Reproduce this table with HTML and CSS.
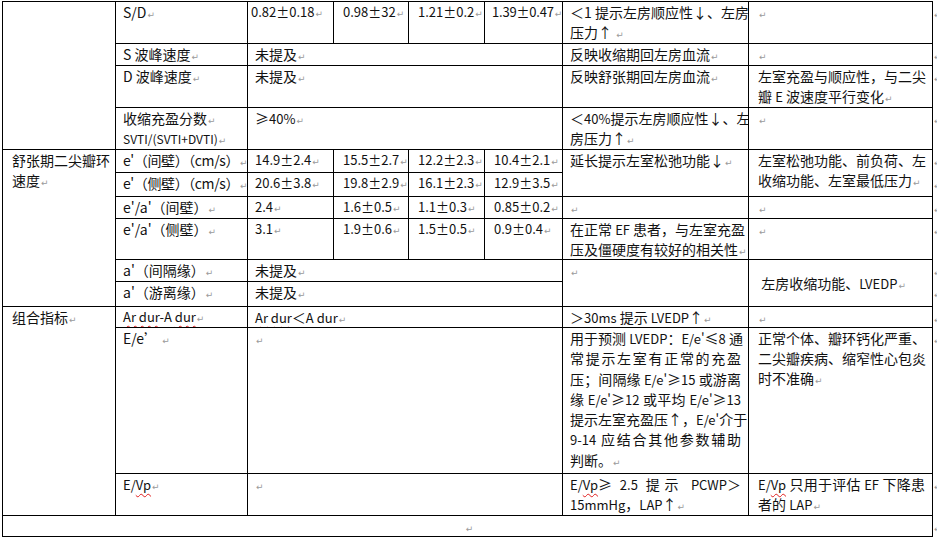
FILE: index.html
```html
<!DOCTYPE html>
<html lang="zh-CN">
<head>
<meta charset="utf-8">
<title>超声参数表</title>
<link rel="stylesheet" href="styles.css">
</head>
<body>
<table class="tbl">
<colgroup>
<col class="w1"><col class="w2"><col class="w3"><col class="w4"><col class="w5"><col class="w6"><col class="w7"><col class="w8"><col class="w9">
</colgroup>
<tr class="r42">
<td rowspan="4"></td>
<td>S/D<span class="p">↵</span></td>
<td class="tight n">0.82±0.18<span class="p">↵</span></td>
<td class="num n">0.98±32<span class="p">↵</span></td>
<td class="num n">1.21±0.2<span class="p">↵</span></td>
<td class="num2 n">1.39±0.47<span class="p">↵</span></td>
<td>＜1 提示左房顺应性↓、左房<br>压力↑ <span class="p">↵</span></td>
<td class="c8"><span class="p">↵</span></td>
<td class="eor"><span class="p">↵</span></td>
</tr>
<tr class="r22">
<td>S 波峰速度<span class="p">↵</span></td>
<td colspan="4">未提及<span class="p">↵</span></td>
<td>反映收缩期回左房血流<span class="p">↵</span></td>
<td class="c8"><span class="p">↵</span></td>
<td class="eor"><span class="p">↵</span></td>
</tr>
<tr class="r42">
<td>D 波峰速度<span class="p">↵</span></td>
<td colspan="4">未提及<span class="p">↵</span></td>
<td>反映舒张期回左房血流<span class="p">↵</span></td>
<td class="c8">左室充盈与顺应性，与二尖<br>瓣 <span class="sm">E</span> 波速度平行变化<span class="p">↵</span></td>
<td class="eor"><span class="p">↵</span></td>
</tr>
<tr class="r42">
<td>收缩充盈分数<span class="p">↵</span><br><span class="xs">SVTI/(SVTI+DVTI)</span><span class="p">↵</span></td>
<td colspan="4">≥<span class="sm">40%</span><span class="p">↵</span></td>
<td>＜<span class="sm">40%</span>提示左房顺应性↓、左<br>房压力↑<span class="p">↵</span></td>
<td class="c8"><span class="p">↵</span></td>
<td class="eor"><span class="p">↵</span></td>
</tr>
<tr class="r23">
<td rowspan="6" class="c1">舒张期二尖瓣环<br>速度<span class="p">↵</span></td>
<td class="c2">e'（间壁）（cm/s）<span class="p">↵</span></td>
<td class="n">14.9±2.4<span class="p">↵</span></td>
<td class="num n">15.5±2.7<span class="p">↵</span></td>
<td class="num n">12.2±2.3<span class="p">↵</span></td>
<td class="num n">10.4±2.1<span class="p">↵</span></td>
<td rowspan="2">延长提示左室松弛功能↓<span class="p">↵</span></td>
<td rowspan="2" class="c8">左室松弛功能、前负荷、左<br>收缩功能、左室最低压力<span class="p">↵</span></td>
<td class="eor"><span class="p">↵</span></td>
</tr>
<tr class="r24">
<td class="c2">e'（侧壁）（cm/s）<span class="p">↵</span></td>
<td class="n">20.6±3.8<span class="p">↵</span></td>
<td class="num n">19.8±2.9<span class="p">↵</span></td>
<td class="num n">16.1±2.3<span class="p">↵</span></td>
<td class="num n">12.9±3.5<span class="p">↵</span></td>
<td class="eor"><span class="p">↵</span></td>
</tr>
<tr class="r22">
<td>e'/a'（间壁）<span class="p">↵</span></td>
<td class="n">2.4<span class="p">↵</span></td>
<td class="num n">1.6±0.5<span class="p">↵</span></td>
<td class="num n">1.1±0.3<span class="p">↵</span></td>
<td class="num n">0.85±0.2<span class="p">↵</span></td>
<td><span class="p">↵</span></td>
<td class="c8"><span class="p">↵</span></td>
<td class="eor"><span class="p">↵</span></td>
</tr>
<tr class="r41">
<td>e'/a'（侧壁）<span class="p">↵</span></td>
<td class="n">3.1<span class="p">↵</span></td>
<td class="num n">1.9±0.6<span class="p">↵</span></td>
<td class="num n">1.5±0.5<span class="p">↵</span></td>
<td class="num n">0.9±0.4<span class="p">↵</span></td>
<td>在正常 <span class="sm">EF</span> 患者，与左室充盈<br>压及僵硬度有较好的相关性<span class="p">↵</span></td>
<td class="c8"><span class="p">↵</span></td>
<td class="eor"><span class="p">↵</span></td>
</tr>
<tr class="r22">
<td>a'（间隔缘）<span class="p">↵</span></td>
<td colspan="4">未提及<span class="p">↵</span></td>
<td rowspan="2"><span class="p">↵</span></td>
<td rowspan="2" class="c8 mid">&nbsp;左房收缩功能、<span class="sm">LVEDP</span><span class="p">↵</span></td>
<td class="eor"><span class="p">↵</span></td>
</tr>
<tr class="r25">
<td>a'（游离缘）<span class="p">↵</span></td>
<td colspan="4">未提及<span class="p">↵</span></td>
<td class="eor"><span class="p">↵</span></td>
</tr>
<tr class="r21">
<td rowspan="3" class="c1">组合指标<span class="p">↵</span></td>
<td class="n"><span class="sp">Ar dur</span>-A <span class="sp">dur</span><span class="p">↵</span></td>
<td colspan="4"><span class="sm"><span class="sp">Ar dur</span></span>＜<span class="sm">A dur</span><span class="p">↵</span></td>
<td>＞<span class="sm">30ms</span> 提示 <span class="sm">LVEDP</span>↑<span class="p">↵</span></td>
<td class="c8"><span class="p">↵</span></td>
<td class="eor"><span class="p">↵</span></td>
</tr>
<tr class="r146">
<td>E/e’ <span class="p">↵</span></td>
<td colspan="4"><span class="p">↵</span></td>
<td class="jc">
<span class="j">用于预测 <span class="sm">LVEDP</span>：<span class="sm">E/e'</span>≤<span class="sm">8</span> 通</span>
<span class="j">常提示左室有正常的充盈</span>
<span class="j">压；间隔缘 <span class="sm">E/e'</span>≥<span class="sm">15</span> 或游离</span>
<span class="j">缘 <span class="sm">E/e'</span>≥<span class="sm">12</span> 或平均 <span class="sm">E/e'</span>≥<span class="sm">13</span></span>
<span class="j">提示左室充盈压↑，<span class="sm">E/e'</span>介于</span>
<span class="j"><span class="sm">9-14</span> 应结合其他参数辅助</span>
<span class="jl">判断。<span class="p">↵</span></span>
</td>
<td class="c8">正常个体、瓣环钙化严重、<br>二尖瓣疾病、缩窄性心包炎<br>时不准确<span class="p">↵</span></td>
<td class="eor"><span class="p">↵</span></td>
</tr>
<tr class="r42">
<td><span class="sm">E/<span class="sp">Vp</span></span><span class="p">↵</span></td>
<td colspan="4"><span class="p">↵</span></td>
<td class="jc">
<span class="j"><span class="sm">E/<span class="sp">Vp</span></span>≥ <span class="sm">2.5</span> 提示 <span class="sm">PCWP</span>＞</span>
<span class="jl"><span class="sm">15mmHg</span>，<span class="sm">LAP</span>↑<span class="p">↵</span></span>
</td>
<td class="c8 jc">
<span class="j"><span class="sm">E/<span class="sp">Vp</span></span> 只用于评估 <span class="sm">EF</span> 下降患</span>
<span class="jl">者的 <span class="sm">LAP</span><span class="p">↵</span></span>
</td>
<td class="eor"><span class="p">↵</span></td>
</tr>
<tr class="r21">
<td colspan="8" class="center"><span class="p">↵</span></td>
<td class="eor"><span class="p">↵</span></td>
</tr>
</table>
</body>
</html>
```
FILE: styles.css
```css
html, body {
  margin: 0;
  padding: 0;
  background: #ffffff;
}
body {
  padding: 1px 0 0 2px;
  font-family: "Noto Sans CJK SC", "Liberation Sans", sans-serif;
  font-size: 14px;
  color: #111111;
}
.tbl {
  border-collapse: collapse;
  table-layout: fixed;
  width: 935px;
}
.w1 { width: 113px; }
.w2 { width: 132px; }
.w3 { width: 86px; }
.w4 { width: 75px; }
.w5 { width: 76px; }
.w6 { width: 78px; }
.w7 { width: 186px; }
.w8 { width: 184px; }
.w9 { width: 5px; }
.tbl td {
  border: 1px solid #000000;
  padding: 0 4px 0 7px;
  vertical-align: top;
  line-height: 20px;
  white-space: nowrap;
  overflow: hidden;
}
.tbl td.n { font-size: 13px; }
.tbl td.c1 { padding-left: 9px; }
.tbl td.c8 { padding-left: 9px; }
.tbl td.num { padding-left: 9px; }
.tbl td.num2 { padding-left: 7px; padding-right: 0; letter-spacing: -0.2px; }
.tbl td.tight { padding-left: 3px; padding-right: 0; }
.tbl td.c2 { letter-spacing: -0.4px; }
.tbl td.mid { vertical-align: middle; padding-left: 9px; }
.tbl td.center { text-align: center; }
.tbl td.eor {
  border: none;
  padding: 0;
  overflow: visible;
}
.r21 { height: 21px; }
.r22 { height: 22px; }
.r23 { height: 23px; }
.r24 { height: 24px; }
.r25 { height: 25px; }
.r41 { height: 41px; }
.r42 { height: 42px; }
.r146 { height: 146px; }
.p {
  color: #9a9a9a;
  font-family: "DejaVu Sans", sans-serif;
  font-size: 9px;
  margin-left: 1px;
  line-height: 0;
}
.sm { font-size: 13px; line-height: 0; }
.xs { font-size: 12px; line-height: 0; }
.sp {
  text-decoration: underline wavy #e02020;
  text-decoration-thickness: 1px;
  text-underline-offset: 3px;
}
.tbl td.jc {
  white-space: normal;
  padding-right: 7px;
  line-height: 20.3px;
}
.j {
  display: block;
  text-align: justify;
  text-align-last: justify;
  white-space: nowrap;
}
.jl {
  display: block;
  white-space: nowrap;
}
```
